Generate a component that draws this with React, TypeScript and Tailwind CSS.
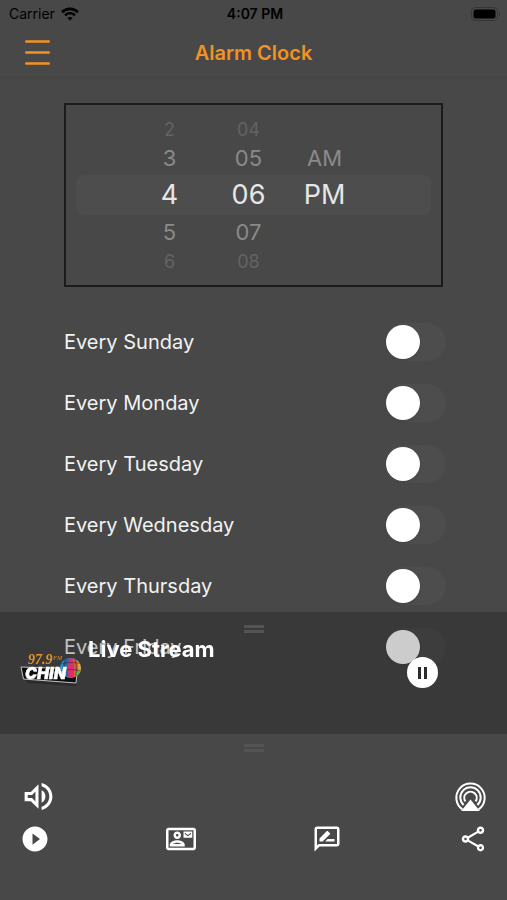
import { useState } from 'react'
import {
  MdOutlineContactMail,
  MdOutlineRateReview,
  MdOutlineShare,
  MdOutlineVolumeUp,
  MdPlayCircleFilled,
} from 'react-icons/md'

const days = ['Sunday', 'Monday', 'Tuesday', 'Wednesday', 'Thursday', 'Friday']

const wheels = [
  { label: 'Hour', width: 'w-20', values: ['2', '3', '4', '5', '6'] },
  { label: 'Minute', width: 'w-[78px]', values: ['04', '05', '06', '07', '08'] },
  { label: 'Period', width: 'w-[74px]', values: ['', 'AM', 'PM', '', ''] },
]

// Rows shrink and fade the further they are from the selected one
const wheelRows = [
  'h-6 text-[18px] text-[#636363]',
  'h-[34px] text-[22px] text-[#8a8a8a]',
  'h-10 text-[27px] text-[#e6e6e6]',
  'h-[34px] text-[22px] text-[#8a8a8a]',
  'h-6 text-[18px] text-[#636363]',
]

function StatusBar() {
  return (
    <div className="grid h-7 grid-cols-3 items-center pr-1.5 pl-[9px] text-sm text-black">
      <div className="flex items-center gap-1.5">
        <span>Carrier</span>
        <svg viewBox="0 0 18 14" className="h-3.5 w-[18px]" fill="none" stroke="currentColor">
          <path d="M1 5.2C5.6.8 12.4.8 17 5.2" strokeWidth="2.6" />
          <path d="M4 8.3c3-2.8 7-2.8 10 0" strokeWidth="2.4" />
          <path d="M9 13.6 6.3 10.9c1.6-1.3 3.8-1.3 5.4 0z" fill="currentColor" stroke="none" />
        </svg>
      </div>
      <span className="text-center font-semibold">4:07 PM</span>
      <svg viewBox="0 0 30 14" className="h-3.5 w-[30px] justify-self-end">
        <rect x="0.5" y="0.5" width="26" height="13" rx="4" fill="none" stroke="#353535" />
        <rect x="2.5" y="2.5" width="22" height="9" rx="2.2" fill="#000" />
        <path d="M28 4.8c1.6.5 1.6 3.9 0 4.4z" fill="#353535" />
      </svg>
    </div>
  )
}

function Header() {
  return (
    <header className="grid h-[50px] grid-cols-[1fr_auto_1fr] items-center border-b border-[#444444] px-6 text-[#f29222]">
      <button type="button" aria-label="Menu" className="w-fit">
        <svg viewBox="0 0 26 26" className="h-[26px] w-[26px]" stroke="currentColor" strokeWidth="2.4" strokeLinecap="round">
          <path d="M2.2 1.5h22.6M2.2 12.5h22.6M2.2 23.5h22.6" />
        </svg>
      </button>
      <h1 className="text-xl font-semibold">Alarm Clock</h1>
    </header>
  )
}

function TimePicker() {
  return (
    <div className="relative flex justify-center border-2 border-[#1b1b1b] py-3 pr-4">
      <div className="absolute inset-x-2.5 top-[70px] h-10 rounded-lg bg-[#4d4d4d]" />
      {wheels.map((wheel) => (
        <ul key={wheel.label} role="listbox" aria-label={wheel.label} className={`relative ${wheel.width}`}>
          {wheel.values.map((value, i) => (
            <li
              key={i}
              role="option"
              aria-selected={i === 2}
              className={`flex items-center justify-center ${wheelRows[i]}`}
            >
              {value}
            </li>
          ))}
        </ul>
      ))}
    </div>
  )
}

function DayRow({ day }: { day: string }) {
  const [enabled, setEnabled] = useState(false)

  return (
    <label className="flex h-[61px] items-center justify-between text-xl text-[#f2f2f2]">
      Every {day}
      <input
        type="checkbox"
        role="switch"
        checked={enabled}
        onChange={(e) => setEnabled(e.target.checked)}
        className="h-[38px] w-[61px] appearance-none rounded-full bg-[#4d4d4d] px-px py-0.5 before:block before:h-[34px] before:w-[34px] before:rounded-full before:bg-white before:shadow-sm checked:bg-[#f29222] checked:before:ml-auto"
      />
    </label>
  )
}

function Handle() {
  return (
    <div className="mx-auto h-2 w-5 border-y-[3px] border-[#545454]" />
  )
}

function Logo() {
  return (
    <svg viewBox="0 0 62 36" className="h-9 w-[62px]" role="img" aria-label="97.9 FM CHIN">
      <defs>
        <clipPath id="globe">
          <ellipse cx="50.5" cy="17" rx="10.5" ry="10" />
        </clipPath>
      </defs>
      <path d="M5 29 57 32l-1 3-48-3z" fill="#2b2b2b" />
      <path d="M1 16 57.5 18 56 32 3.5 28z" fill="#0d0d0d" stroke="#c4c4c4" strokeWidth="1" />
      <g clipPath="url(#globe)">
        <path d="M38 5h25v26H38z" fill="#2c9fd8" />
        <path d="M47 5c-5 6-6 14-4 24h6c-2-9-1-17 2-24z" fill="#1b6fae" />
        <path d="M50 5c-3 8-3 16-1 24h5c1-9 0-17-2-24z" fill="#d92f6d" />
        <path d="M52 5c3 7 3 15 1 24l4-2c2-8 1-16-3-22z" fill="#f0562a" />
        <path d="M55 5c4 7 4 14 2 22l7-8V5z" fill="#f6a02c" />
        <path d="M56 21c2-1 4-1 7-3v12h-9z" fill="#58b947" />
        <path d="M41 13c6-2 14-2 21 0M40 20c7-2 15-2 21 0" stroke="#222" strokeWidth=".5" fill="none" />
        <path d="M47 6c-4 7-4 15-2 22M54 6c3 7 3 15 1 22" stroke="#222" strokeWidth=".5" fill="none" />
      </g>
      <text x="8" y="13" fontSize="14" fontWeight="700" fontStyle="italic" fill="#e8942a" fontFamily="'Liberation Serif', serif">
        97.9
      </text>
      <text x="33" y="9" fontSize="6" fontWeight="700" fontStyle="italic" fill="#b87a30" fontFamily="'Liberation Serif', serif">
        FM
      </text>
      <text x="5" y="28" fontSize="16" fontWeight="900" fontStyle="italic" fill="#fff" stroke="#fff" strokeWidth=".4" fontFamily="Inter, sans-serif">
        CHIN
      </text>
    </svg>
  )
}

function AirPlayIcon() {
  return (
    <svg viewBox="0 0 36 36" className="h-9 w-9" fill="none" stroke="currentColor" strokeWidth="2">
      <path d="M10.4 30.4a14.2 14.2 0 1 1 16.2 0" />
      <path d="M11.6 26a10.2 10.2 0 1 1 13.8 0" />
      <path d="M13.4 22.4a6.2 6.2 0 1 1 10.2 0" />
      <path d="M18.5 20.4 27.8 32H9.2z" fill="currentColor" stroke="none" />
    </svg>
  )
}

function Player() {
  return (
    <section className="h-[122px] bg-black/20 pt-[13px]">
      <Handle />
      <div className="flex items-start pl-5 pr-[69px]">
        <div className="pt-[18px]">
          <Logo />
        </div>
        <h2 className="ml-1.5 pt-0.5 text-[22px] leading-7 font-bold text-white">Live Stream</h2>
        <button
          type="button"
          aria-label="Pause"
          className="mt-6 ml-auto flex h-[31px] w-[31px] items-center justify-center gap-[3px] rounded-full bg-white"
        >
          <span className="h-3 w-[3px] bg-[#2b2b2b]" />
          <span className="h-3 w-[3px] bg-[#2b2b2b]" />
        </button>
      </div>
    </section>
  )
}

function Controls() {
  return (
    <section className="bg-[#484848] pt-2.5 pr-[19px] pb-[46px] pl-5 text-white">
      <Handle />
      <div className="mt-[26px] flex justify-between">
        <button type="button" aria-label="Volume">
          <MdOutlineVolumeUp className="h-[37px] w-[37px]" />
        </button>
        <button type="button" aria-label="AirPlay">
          <AirPlayIcon />
        </button>
      </div>
      <div className="mt-[9px] flex justify-between">
        <button type="button" aria-label="Live stream">
          <MdPlayCircleFilled className="h-[30px] w-[30px]" />
        </button>
        <button type="button" aria-label="Contact">
          <MdOutlineContactMail className="h-[30px] w-[30px]" />
        </button>
        <button type="button" aria-label="Review">
          <MdOutlineRateReview className="h-[30px] w-[30px]" />
        </button>
        <button type="button" aria-label="Share">
          <MdOutlineShare className="h-[30px] w-[30px]" />
        </button>
      </div>
    </section>
  )
}

export default function App() {
  return (
    <div className="min-h-screen bg-[#484848] font-['Inter',sans-serif]">
      <StatusBar />
      <Header />

      <main className="pt-[25px]">
        <div className="px-16">
          <TimePicker />
        </div>
        <div className="mt-6 pr-[61px] pl-16">
          {days.map((day) => (
            <DayRow key={day} day={day} />
          ))}
        </div>
      </main>

      {/* The player floats over the end of the day list */}
      <footer className="fixed inset-x-0 bottom-0">
        <Player />
        <Controls />
      </footer>
    </div>
  )
}
